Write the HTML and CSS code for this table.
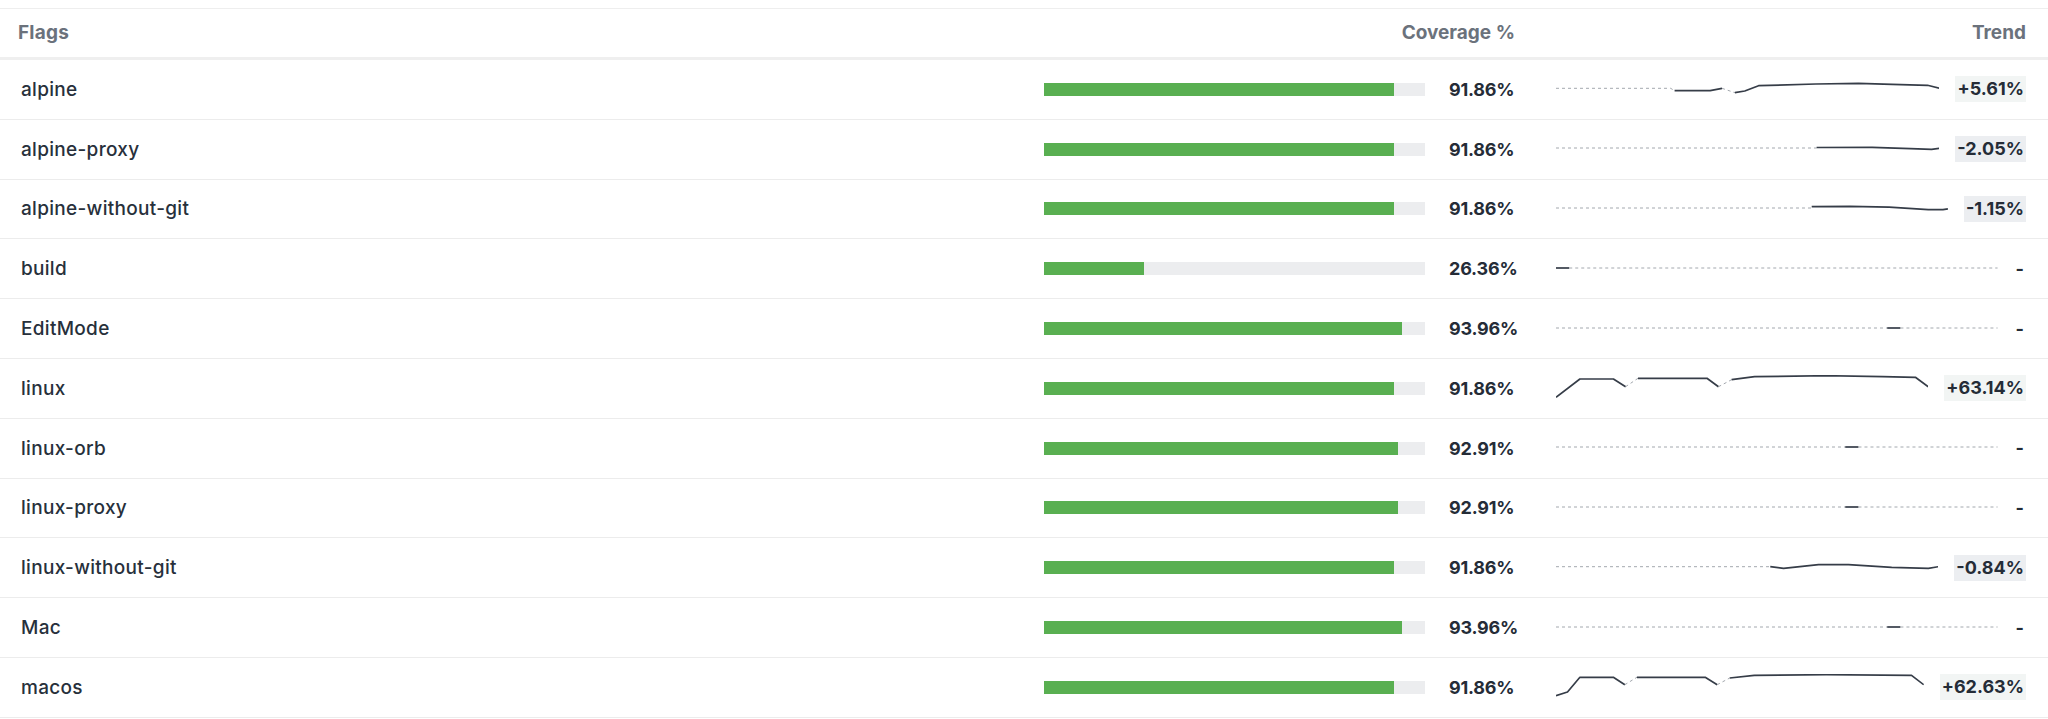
FILE: index.html
```html
<!DOCTYPE html>
<html lang="en">
<head>
<meta charset="utf-8">
<title>Flags coverage</title>
<link rel="stylesheet" href="styles.css">
</head>
<body>
<div class="panel">
  <div class="row head">
    <div class="c-name">Flags</div>
    <div class="c-cov">Coverage %</div>
    <div class="c-trend">Trend</div>
  </div>

  <div class="row">
    <div class="c-name">alpine</div>
    <div class="c-cov"><div class="track"><div class="fill" style="width:91.86%"></div></div><span class="pct">91.86%</span></div>
    <div class="c-trend">
      <svg class="spark" viewBox="0 0 400 26" preserveAspectRatio="none">
        <path class="gap" d="M0 12.3 H119.6 L123.7 14.7"/>
        <path class="line" d="M123.7 14.7 H160.8 L173.2 12.3"/>
        <path class="gap" d="M173.2 12.3 L186.6 16.7"/>
        <path class="line" d="M186.6 16.7 L196.9 15 L211.3 9.7 L271.1 8 L315.5 7.3 L350.5 8.3 L387.6 9.3 L400 12.3"/>
      </svg>
      <span class="delta up">+5.61%</span>
    </div>
  </div>

  <div class="row">
    <div class="c-name">alpine-proxy</div>
    <div class="c-cov"><div class="track"><div class="fill" style="width:91.86%"></div></div><span class="pct">91.86%</span></div>
    <div class="c-trend">
      <svg class="spark" viewBox="0 0 400 26" preserveAspectRatio="none">
        <path class="gap" d="M0 12 H272"/>
        <path class="line" d="M272 11.5 L330 11.3 L370 12.6 L392 13.3 L400 12.3"/>
      </svg>
      <span class="delta down">-2.05%</span>
    </div>
  </div>

  <div class="row">
    <div class="c-name">alpine-without-git</div>
    <div class="c-cov"><div class="track"><div class="fill" style="width:91.86%"></div></div><span class="pct">91.86%</span></div>
    <div class="c-trend">
      <svg class="spark" viewBox="0 0 400 26" preserveAspectRatio="none">
        <path class="gap" d="M0 12 H261"/>
        <path class="line" d="M261 10.6 L300 10.3 L340 11.2 L380 13.6 L395 13.6 L400 12.8"/>
      </svg>
      <span class="delta down">-1.15%</span>
    </div>
  </div>

  <div class="row">
    <div class="c-name">build</div>
    <div class="c-cov"><div class="track"><div class="fill" style="width:26.36%"></div></div><span class="pct">26.36%</span></div>
    <div class="c-trend">
      <svg class="spark" viewBox="0 0 400 26" preserveAspectRatio="none">
        <path class="line" d="M0 12 H12"/>
        <path class="gap" d="M12 12 H400"/>
      </svg>
      <span class="delta none">-</span>
    </div>
  </div>

  <div class="row">
    <div class="c-name">EditMode</div>
    <div class="c-cov"><div class="track"><div class="fill" style="width:93.96%"></div></div><span class="pct">93.96%</span></div>
    <div class="c-trend">
      <svg class="spark" viewBox="0 0 400 26" preserveAspectRatio="none">
        <path class="gap" d="M0 12 H300"/>
        <path class="line" d="M300 12 H312"/>
        <path class="gap" d="M312 12 H400"/>
      </svg>
      <span class="delta none">-</span>
    </div>
  </div>

  <div class="row">
    <div class="c-name">linux</div>
    <div class="c-cov"><div class="track"><div class="fill" style="width:91.86%"></div></div><span class="pct">91.86%</span></div>
    <div class="c-trend">
      <svg class="spark" viewBox="0 0 400 26" preserveAspectRatio="none">
        <path class="line" d="M0 22.3 L25.7 4 H61.7 L74.8 11.7"/>
        <path class="gap" d="M74.8 11.7 L88.1 3.3"/>
        <path class="line" d="M88.1 3.3 H162.2 L174.6 11.7"/>
        <path class="gap" d="M174.6 11.7 L188.7 4.7"/>
        <path class="line" d="M188.7 4.7 L213.4 1.7 L291 0.7 L351 1.7 L386.2 2.3 L400 11.7"/>
      </svg>
      <span class="delta up">+63.14%</span>
    </div>
  </div>

  <div class="row">
    <div class="c-name">linux-orb</div>
    <div class="c-cov"><div class="track"><div class="fill" style="width:92.91%"></div></div><span class="pct">92.91%</span></div>
    <div class="c-trend">
      <svg class="spark" viewBox="0 0 400 26" preserveAspectRatio="none">
        <path class="gap" d="M0 12 H262"/>
        <path class="line" d="M262 12 H274"/>
        <path class="gap" d="M274 12 H400"/>
      </svg>
      <span class="delta none">-</span>
    </div>
  </div>

  <div class="row">
    <div class="c-name">linux-proxy</div>
    <div class="c-cov"><div class="track"><div class="fill" style="width:92.91%"></div></div><span class="pct">92.91%</span></div>
    <div class="c-trend">
      <svg class="spark" viewBox="0 0 400 26" preserveAspectRatio="none">
        <path class="gap" d="M0 12 H262"/>
        <path class="line" d="M262 12 H274"/>
        <path class="gap" d="M274 12 H400"/>
      </svg>
      <span class="delta none">-</span>
    </div>
  </div>

  <div class="row">
    <div class="c-name">linux-without-git</div>
    <div class="c-cov"><div class="track"><div class="fill" style="width:91.86%"></div></div><span class="pct">91.86%</span></div>
    <div class="c-trend">
      <svg class="spark" viewBox="0 0 400 26" preserveAspectRatio="none">
        <path class="gap" d="M0 11.7 H224.2"/>
        <path class="line" d="M224.2 11.7 L238.1 13.3 L274.7 9.7 L306 9.7 L351.2 12.3 L389.6 13.3 L400 11.7"/>
      </svg>
      <span class="delta down">-0.84%</span>
    </div>
  </div>

  <div class="row">
    <div class="c-name">Mac</div>
    <div class="c-cov"><div class="track"><div class="fill" style="width:93.96%"></div></div><span class="pct">93.96%</span></div>
    <div class="c-trend">
      <svg class="spark" viewBox="0 0 400 26" preserveAspectRatio="none">
        <path class="gap" d="M0 12 H300"/>
        <path class="line" d="M300 12 H312"/>
        <path class="gap" d="M312 12 H400"/>
      </svg>
      <span class="delta none">-</span>
    </div>
  </div>

  <div class="row">
    <div class="c-name">macos</div>
    <div class="c-cov"><div class="track"><div class="fill" style="width:91.86%"></div></div><span class="pct">91.86%</span></div>
    <div class="c-trend">
      <svg class="spark" viewBox="0 0 400 26" preserveAspectRatio="none">
        <path class="line" d="M0 21.7 L12.5 18 L26 3.3 H62.4 L74.9 10.7"/>
        <path class="gap" d="M74.9 10.7 L88 3.3"/>
        <path class="line" d="M88 3.3 H162.3 L175.4 10.7"/>
        <path class="gap" d="M175.4 10.7 L189 4"/>
        <path class="line" d="M189 4 L215.7 1.3 L294 0.7 L386.8 1.3 L400 10.7"/>
      </svg>
      <span class="delta up">+62.63%</span>
    </div>
  </div>
</div>
</body>
</html>
```

FILE: styles.css
```css
html, body {
  margin: 0;
  padding: 0;
  background: #ffffff;
}

body {
  font-family: Inter, "Noto Sans", "Liberation Sans", sans-serif;
  color: #2a313c;
}

.panel {
  padding-top: 8px;
}

.row {
  display: grid;
  grid-template-columns: 1fr 471px 470px;
  column-gap: 41px;
  align-items: center;
  box-sizing: border-box;
  height: 59.8px;
  padding: 0 22px 0 21px;
  border-bottom: 1px solid #ececec;
  font-size: 19px;
}

.row.head {
  height: 52px;
  padding-left: 18px;
  padding-bottom: 2px;
  border-top: 1px solid #eeeeee;
  border-bottom: 3px solid #efefef;
  font-weight: 700;
  color: #6b727c;
}

.head .c-cov,
.head .c-trend {
  justify-content: flex-end;
}

.c-name {
  white-space: nowrap;
  letter-spacing: 0.3px;
  font-weight: 450;
  color: #27303b;
}

.head .c-name {
  font-weight: 700;
  letter-spacing: 0.2px;
  color: #6b727c;
}

.c-cov {
  display: flex;
  align-items: center;
  gap: 24px;
}

.track {
  flex: 1;
  height: 13px;
  background: #ecedef;
}

.fill {
  height: 100%;
  background: #59af51;
}

.pct {
  width: 66px;
  flex: none;
  text-align: right;
  padding-right: 3px;
  box-sizing: border-box;
  font-weight: 700;
  letter-spacing: -0.2px;
  color: #252c37;
  font-size: 18px;
}

.c-trend {
  display: flex;
  align-items: center;
  gap: 16px;
}

.spark {
  flex: 1;
  min-width: 0;
  height: 26px;
  display: block;
}

.spark path {
  fill: none;
  vector-effect: non-scaling-stroke;
  stroke-linejoin: round;
}

.spark .line {
  stroke: #363d48;
  stroke-width: 1.7;
}

.spark .gap {
  stroke: #a3a8ae;
  stroke-width: 1;
  stroke-dasharray: 3 3;
}

.delta {
  flex: none;
  font-weight: 700;
  font-size: 18px;
  line-height: 22px;
  padding: 2px 2px;
  color: #252c37;
}

.delta.up {
  background: #f2f5f4;
}

.delta.down {
  background: #eceef1;
}

.delta.none {
  background: transparent;
}
```
